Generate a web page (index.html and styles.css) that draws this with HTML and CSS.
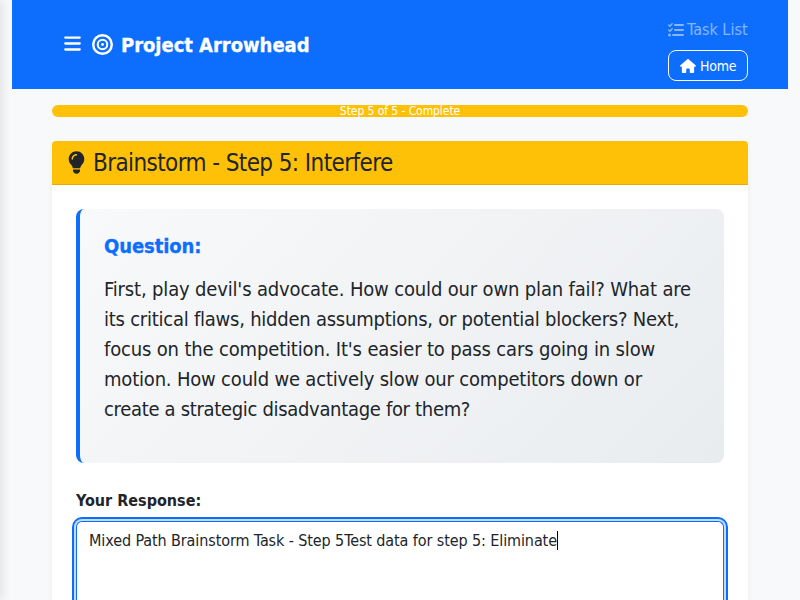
FILE: index.html
```html
<!DOCTYPE html>
<html lang="en">
<head>
<meta charset="utf-8">
<title>Project Arrowhead</title>
<link rel="stylesheet" href="styles.css">
</head>
<body>
<aside class="sidebar"></aside>
<header class="header">
  <div class="brand">
    <svg class="icon-bars" viewBox="0 0 448 512"><path d="M0 96C0 78.300 14.300 64 32 64H416c17.700 0 32 14.300 32 32s-14.300 32-32 32H32C14.300 128 0 113.700 0 96zM0 256c0-17.700 14.300-32 32-32H416c17.700 0 32 14.300 32 32s-14.300 32-32 32H32c-17.700 0-32-14.300-32-32zM448 416c0 17.700-14.300 32-32 32H32c-17.700 0-32-14.300-32-32s14.300-32 32-32H416c17.700 0 32 14.300 32 32z"/></svg>
    <svg class="icon-target" viewBox="0 0 512 512"><g fill="none" stroke="currentColor"><circle cx="256" cy="256" r="226" stroke-width="60"/><circle cx="256" cy="256" r="116" stroke-width="50"/></g><circle cx="256" cy="256" r="34"/></svg>
    <h1 class="title">Project Arrowhead</h1>
  </div>
  <nav class="nav">
    <a class="task-link"><svg class="icon-tasks" viewBox="0 0 512 512"><path d="M224 96H480M224 256H480M160 416H480" fill="none" stroke="currentColor" stroke-width="64" stroke-linecap="round"/><path d="M24 96L64 134L132 58M24 256L64 294L132 218" fill="none" stroke="currentColor" stroke-width="48" stroke-linecap="round" stroke-linejoin="round"/><circle cx="48" cy="416" r="48"/></svg><span class="task-text">Task List</span></a>
    <a class="home-btn"><svg class="icon-home" viewBox="0 0 576 512"><path d="M575.800 255.500c0 18-15 32.100-32 32.100h-32l.7 160.200c0 2.700-.2 5.400-.5 8.100V472c0 22.100-17.900 40-40 40H392c-22.100 0-40-17.900-40-40V376c0-17.700-14.300-32-32-32H256c-17.700 0-32 14.300-32 32v96c0 22.100-17.900 40-40 40H104c-22.100 0-40-17.900-40-40V287.600H32c-18 0-32-14-32-32.100 0-9 3-17 10-24L266.400 8c7-7 15-8 22-8s15 2 21 7L564.800 231.500c8 7 12 15 11 24z"/></svg><span class="home-text">Home</span></a>
  </nav>
</header>
<main class="content">
  <div class="progress"><span class="progress-text">Step 5 of 5 - Complete</span></div>
  <section class="card">
    <div class="card-head">
      <svg class="icon-bulb" viewBox="0 0 384 512"><path fill-rule="evenodd" d="M272 384c9.600-31.900 29.500-59.100 49.200-86.200 5.200-7.100 10.400-14.200 15.400-21.400 19.800-28.500 31.400-63 31.400-100.300C368 78.800 289.200 0 192 0S16 78.800 16 176c0 37.300 11.600 71.900 31.400 100.300 5 7.200 10.200 14.300 15.400 21.400 19.800 27.100 39.700 54.400 49.200 86.200zM192 512c44.200 0 80-35.800 80-80V416H112v16c0 44.200 35.800 80 80 80zM112 176c0 8.800-7.200 16-16 16s-16-7.200-16-16c0-61.900 50.100-112 112-112 8.800 0 16 7.200 16 16s-7.200 16-16 16c-44.200 0-80 35.800-80 80z"/></svg>
      <h2 class="card-title">Brainstorm - Step 5: Interfere</h2>
    </div>
    <div class="card-body">
      <div class="question">
        <h3 class="question-title"><span class="q-label">Question:</span></h3>
        <p class="question-text">
          <span class="line line-1">First, play devil's advocate. How could our own plan fail? What are</span>
          <span class="line line-2">its critical flaws, hidden assumptions, or potential blockers? Next,</span>
          <span class="line line-3">focus on the competition. It's easier to pass cars going in slow</span>
          <span class="line line-4">motion. How could we actively slow our competitors down or</span>
          <span class="line line-5">create a strategic disadvantage for them?</span>
        </p>
      </div>
      <div class="label"><span class="label-text">Your Response:</span></div>
      <div class="response"><span class="response-text">Mixed Path Brainstorm Task - Step 5Test data for step 5: Eliminate</span><span class="caret"></span></div>
    </div>
  </section>
</main>
</body>
</html>
```
FILE: styles.css
```css
* { box-sizing: border-box; }
html, body { height: 100%; overflow: hidden; }
body {
  margin: 0;
  background: #f8f9fb;
  color: #212529;
  font-family: "DejaVu Sans Condensed", "DejaVu Sans", sans-serif;
  font-stretch: condensed;
  font-size: 16px;
  line-height: 1.5;
}
h1, h2, h3, p { margin: 0; }
svg { fill: currentColor; flex: none; display: block; }
span, h1, h2 { white-space: nowrap; }
.sidebar {
  position: absolute;
  left: -280px;
  top: 0;
  width: 280px;
  height: 100%;
  box-shadow: 2px 0 10px rgba(0, 0, 0, .1);
}
.header {
  position: relative;
  margin: 0 12px;
  height: 89px;
  padding: 0 40px 0 52px;
  background: #0d6efd;
  color: #fff;
  display: flex;
  justify-content: space-between;
  align-items: center;
}
.brand { display: flex; align-items: center; }
.icon-bars { width: 17px; height: 19px; margin-right: 11px; margin-bottom: 2px; }
.icon-target { width: 21px; height: 21px; margin-right: 8px; }
.title { font-size: 20px; line-height: 30px; letter-spacing: -.03px; -webkit-text-stroke: .3px currentColor; }
.nav { display: flex; flex-direction: column; width: 80px; padding-top: 9px; height: 89px; }
.task-link { display: flex; align-items: center; height: 41px; color: rgba(255, 255, 255, .5); }
.icon-tasks { width: 16px; height: 16px; margin-right: 3px; }
.task-text { letter-spacing: 0; }
.home-btn {
  height: 31px;
  border: 1px solid #f8f9fa;
  border-radius: 8px;
  display: flex;
  align-items: center;
  padding-left: 11px;
  font-size: 14px;
}
.icon-home { width: 16px; height: 14px; margin-right: 4px; }
.home-text { letter-spacing: -.25px; padding-top: 1px; }
.content { padding: 16px 52px 0; height: calc(100% - 89px); overflow: hidden; }
.progress {
  height: 12px;
  margin-bottom: 24px;
  border-radius: 6px;
  background: #ffc107;
  overflow: hidden;
  display: flex;
  justify-content: center;
  align-items: center;
  color: #fff;
  font-size: 12px;
}
.progress-text { letter-spacing: -.07px; }
.card {
  height: calc(100% - 36px);
  background: #fff;
  border-radius: 4px 4px 0 0;
  box-shadow: 0 2px 4px rgba(0, 0, 0, .075);
}
.card-head {
  display: flex;
  align-items: center;
  height: 44px;
  padding-left: 16px;
  background: #ffc107;
  border-bottom: 1px solid #e0aa08;
  border-radius: 4px 4px 0 0;
}
.icon-bulb { width: 17px; height: 23px; margin-right: 8px; }
.card-title { font-size: 24px; line-height: 29px; font-weight: 400; letter-spacing: -.6px; padding-top: 2px; }
.card-body {
  display: flex;
  flex-direction: column;
  height: calc(100% - 44px);
  padding: 24px 24px 0;
}
.question {
  flex: none;
  height: 254px;
  padding: 25px 24px 24px;
  border-left: 4px solid #0d6efd;
  border-radius: 8px;
  background: linear-gradient(135deg, #f8f9fa, #e9ecef);
}
.question-title { font-size: 20px; line-height: 24px; margin-bottom: 16px; color: #0d6efd; -webkit-text-stroke: .3px currentColor; }
.q-label { letter-spacing: -.1px; }
.question-text { font-size: 20px; line-height: 30px; }
.line { display: block; width: max-content; }
.line-1 { letter-spacing: -.16px; }
.line-2 { letter-spacing: -.24px; }
.line-3 { letter-spacing: -.16px; }
.line-4 { letter-spacing: -.19px; }
.line-5 { letter-spacing: -.32px; }
.label { margin: 26px 0 8px; font-weight: 700; }
.response {
  flex: 1;
  padding: 7px 12px;
  border: 1px solid #0d6efd;
  border-bottom: 0;
  border-radius: 6px 6px 0 0;
  background: #fff;
  box-shadow: 0 0 0 2px #c2dbfe, 0 0 0 4px #0d6efd;
  display: flex;
}
.response-text { letter-spacing: -.1px; }
.caret { width: 1px; height: 19px; margin-top: 2px; background: #000; }
```
